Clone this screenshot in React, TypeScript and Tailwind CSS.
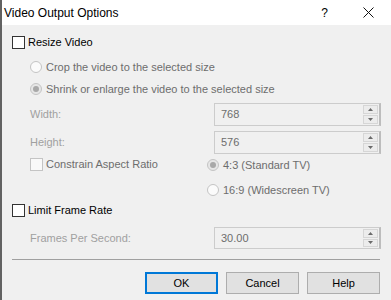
const font = { fontFamily: '"Liberation Sans", Arial, sans-serif' };

const Check = ({ label, disabled }: { label: string; disabled?: boolean }) => (
    <div className="flex items-center h-[15px]">
        <span
            className={`w-[13px] h-[13px] border ${disabled ? "border-[#c4c4c4] bg-[#f9f9f9]" : "border-[#333333] bg-white"}`}
        />
        <span className={`ml-[3px] text-[11px] ${disabled ? "text-[#6d6d6d]" : "text-black"}`}>{label}</span>
    </div>
);

const Radio = ({ label, checked }: { label: string; checked?: boolean }) => (
    <div className="flex items-center h-[14px]">
        <span
            className={`w-[12px] h-[12px] rounded-full border border-[#c4c4c4] flex items-center justify-center ${checked ? "bg-[#e6e6e6]" : "bg-[#fbfbfb]"}`}
        >
            {checked && <span className="w-[6px] h-[6px] rounded-full bg-[#a8a8a8]" />}
        </span>
        <span className="ml-[4px] text-[11px] text-[#6d6d6d]">{label}</span>
    </div>
);

const Spinner = ({ value, h = "h-[23px]" }: { value: string; h?: string }) => (
    <div className={`w-[167px] ${h} border border-[#cccccc] border-r-2 border-r-[#bdbdbd] flex items-stretch`}>
        <span className="flex-1 pl-[6px] flex items-center text-[11px] text-[#6d6d6d]">{value}</span>
        <div className="w-[16px] flex flex-col gap-[1px] py-[1px] pr-[1px]">
            <span className="flex-1 border border-[#d6d6d6] bg-[#ececec] flex items-center justify-center">
                <svg width="5" height="3" viewBox="0 0 5 3"><path d="M2.5 0L5 3H0z" fill="#6a6a6a" /></svg>
            </span>
            <span className="flex-1 border border-[#d6d6d6] bg-[#ececec] flex items-center justify-center">
                <svg width="5" height="3" viewBox="0 0 5 3"><path d="M0 0H5L2.5 3z" fill="#6a6a6a" /></svg>
            </span>
        </div>
    </div>
);

const Btn = ({ label, focused }: { label: string; focused?: boolean }) => (
    <button
        className={`w-[73px] h-[22px] bg-[#e1e1e1] text-[11px] text-black flex items-center justify-center ${focused ? "border-2 border-[#0078d7]" : "border border-[#adadad]"}`}
    >
        {label}
    </button>
);

const App = () => {
    return (
        <div className="w-[391px] h-[300px] bg-[#f0f0f0] border-l-2 border-[#626262] flex flex-col" style={font}>
            <div className="h-[25px] bg-white flex items-center shrink-0">
                <span className="ml-[2px] text-[12px] text-black">Video Output Options</span>
                <span className="ml-auto text-[12px] text-black mr-[35px]">?</span>
                <svg className="mr-[17px]" width="11" height="11" viewBox="0 0 11 11">
                    <path d="M0.5 0.5L10.5 10.5M10.5 0.5L0.5 10.5" stroke="#111" strokeWidth="1" />
                </svg>
            </div>

            <div className="pl-[10px] pr-[10px] flex flex-col">
                <div className="mt-[10px]">
                    <Check label="Resize Video" />
                </div>

                <div className="pl-[18px] mt-[10px]">
                    <Radio label="Crop the video to the selected size" />
                </div>
                <div className="pl-[18px] mt-[8px]">
                    <Radio label="Shrink or enlarge the video to the selected size" checked />
                </div>

                <div className="pl-[18px] mt-[7px] flex items-center justify-between">
                    <span className="text-[11px] text-[#a0a0a0]">Width:</span>
                    <Spinner value="768" />
                </div>
                <div className="pl-[18px] mt-[5px] flex items-center justify-between">
                    <span className="text-[11px] text-[#a0a0a0]">Height:</span>
                    <Spinner value="576" />
                </div>

                <div className="pl-[18px] mt-[3px] flex">
                    <div className="w-[177px]">
                        <Check label="Constrain Aspect Ratio" disabled />
                    </div>
                    <div className="flex flex-col gap-[11px] pt-[1px]">
                        <Radio label="4:3 (Standard TV)" checked />
                        <Radio label="16:9 (Widescreen TV)" />
                    </div>
                </div>

                <div className="mt-[6px]">
                    <Check label="Limit Frame Rate" />
                </div>

                <div className="pl-[18px] mt-[9px] flex items-center justify-between">
                    <span className="text-[11px] text-[#a0a0a0]">Frames Per Second:</span>
                    <Spinner value="30.00" h="h-[22px]" />
                </div>

                <div className="mt-[10px] mr-[1px] h-[1px] bg-[#a0a0a0]" />

                <div className="mt-[12px] mr-[1px] flex justify-end gap-[8px]">
                    <Btn label="OK" focused />
                    <Btn label="Cancel" />
                    <Btn label="Help" />
                </div>
            </div>
        </div>
    );
};

export default App;
